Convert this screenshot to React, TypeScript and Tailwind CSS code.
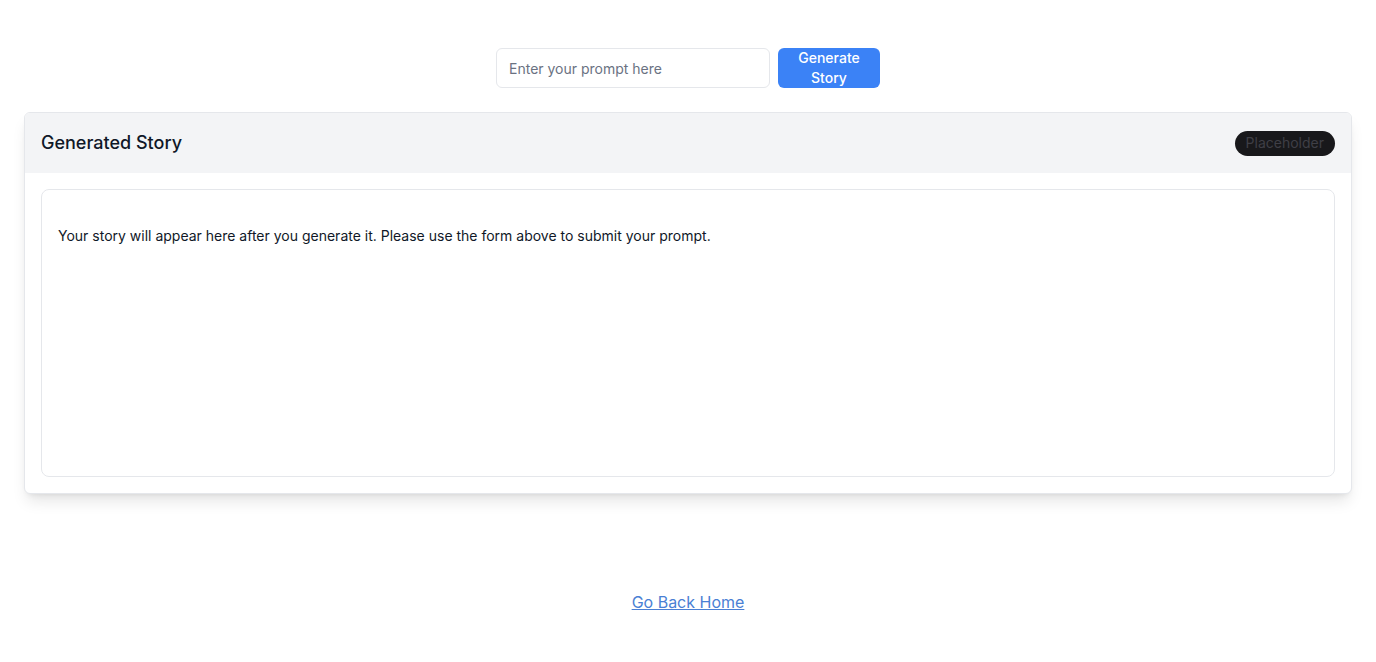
import React from "react";

export default function App() {
  return (
    <div className="min-h-screen bg-white" style={{ fontFamily: "Inter, 'Noto Sans', sans-serif" }}>
      <div className="flex justify-center gap-2 pt-12">
        <input
          type="text"
          placeholder="Enter your prompt here"
          className="h-10 w-[274px] rounded-md border border-gray-200 px-3 text-sm text-gray-900 placeholder:text-gray-500 outline-none"
        />
        <button className="h-10 w-[102px] rounded-md bg-[#3b82f6] text-sm font-medium leading-5 text-white">
          Generate
          <br />
          Story
        </button>
      </div>
      <div className="mx-6 mt-6 overflow-hidden rounded-md border border-gray-200 bg-white shadow-lg">
        <div className="flex h-[60px] items-center justify-between bg-[#f3f4f6] px-4">
          <h2 className="text-lg font-medium text-gray-900">Generated Story</h2>
          <span className="flex h-[25px] items-center rounded-full bg-[#18181b] px-[11px] text-sm text-[#3f3f46]">
            Placeholder
          </span>
        </div>
        <div className="p-4">
          <div className="h-[288px] rounded-lg border border-gray-200 px-4 pt-[36px]">
            <p className="text-sm leading-5 text-gray-900">
              Your story will appear here after you generate it. Please use the form above to submit your prompt.
            </p>
          </div>
        </div>
      </div>
      <div className="mt-[96px] flex justify-center">
        <a href="#" className="text-base text-[#4a7fd4] underline">
          Go Back Home
        </a>
      </div>
    </div>
  );
}
